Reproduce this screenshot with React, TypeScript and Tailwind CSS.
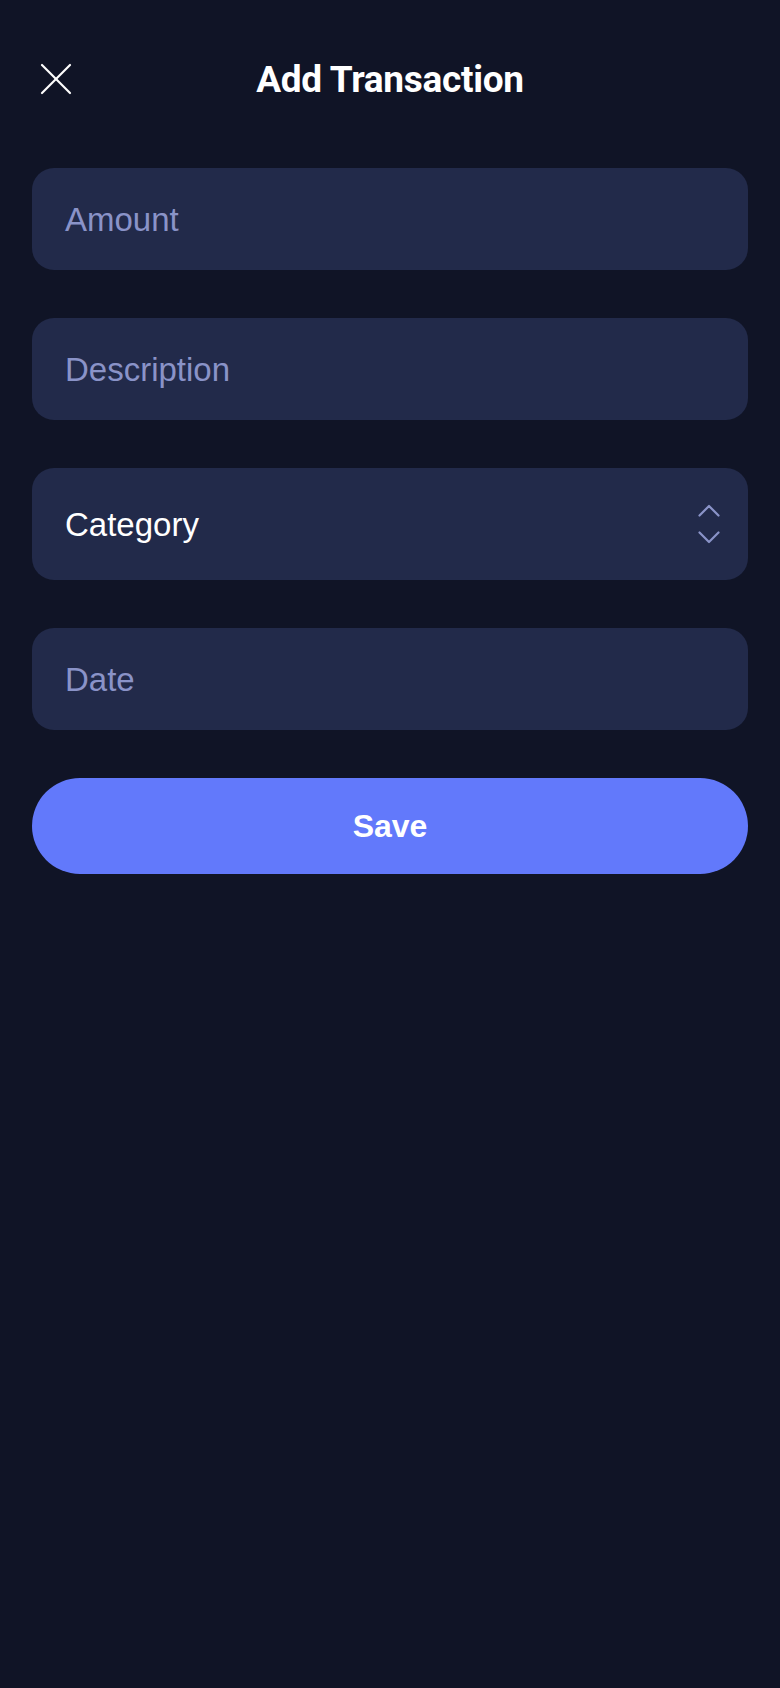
import React from "react"

const fieldText = "font-['Liberation_Sans',Arial,sans-serif] text-[33px] leading-none"

function Field({ label }: { label: string }) {
  return (
    <div className="h-[102px] rounded-[22px] bg-[#222a4a] flex items-center pl-[33px]">
      <span className={`${fieldText} text-[#8a93c8]`}>{label}</span>
    </div>
  )
}

export default function App() {
  return (
    <div className="min-h-screen bg-[#101426] px-8 pt-[50px]">
      {/* Header */}
      <div className="grid grid-cols-[1fr_auto_1fr] items-center h-[58px]">
        <button className="justify-self-start ml-[8px] w-[32px] h-[32px]">
          <svg width="32" height="32" viewBox="0 0 32 32" fill="none" stroke="white" strokeWidth="2.2" strokeLinecap="round">
            <path d="M2 2 L30 30" />
            <path d="M30 2 L2 30" />
          </svg>
        </button>
        <h1 className="font-['Roboto',Arial,sans-serif] font-bold text-[37px] leading-none text-white tracking-[-0.3px]">
          Add Transaction
        </h1>
        <div />
      </div>

      {/* Form */}
      <div className="mt-[60px] flex flex-col gap-12">
        <Field label="Amount" />
        <Field label="Description" />

        <div className="h-[112px] rounded-[22px] bg-[#222a4a] flex items-center justify-between pl-[33px] pr-[28px]">
          <span className={`${fieldText} text-white`}>Category</span>
          <svg width="22" height="40" viewBox="0 0 22 40" fill="none" stroke="#8a93c8" strokeWidth="2.2" strokeLinecap="round" strokeLinejoin="round">
            <path d="M1.5 11.5 L11 2 L20.5 11.5" />
            <path d="M1.5 28.5 L11 38 L20.5 28.5" />
          </svg>
        </div>

        <Field label="Date" />

        <button className="h-[96px] rounded-full bg-[#6279fb] flex items-center justify-center">
          <span className="font-['Liberation_Sans',Arial,sans-serif] font-bold text-[32px] leading-none text-white">Save</span>
        </button>
      </div>
    </div>
  )
}
